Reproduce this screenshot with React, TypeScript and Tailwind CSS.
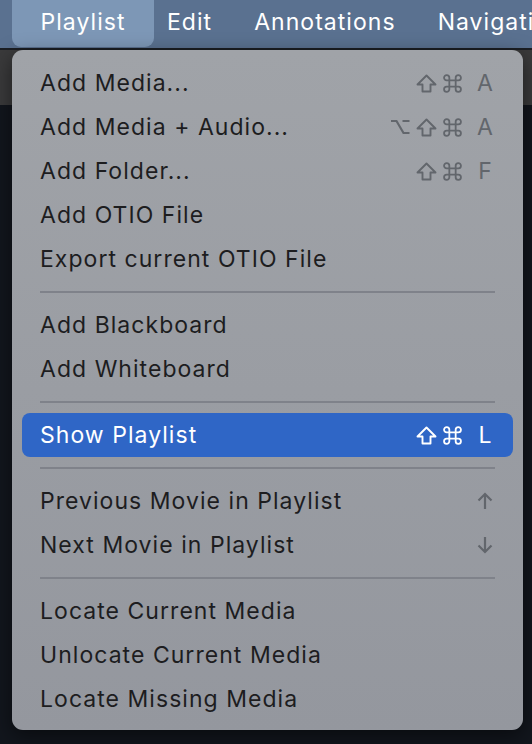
import React from "react";

type Item =
  | { kind: "item"; label: string; keys?: React.ReactNode[]; active?: boolean }
  | { kind: "sep" };

const ShiftKey = () => (
  <svg width="21" height="19" viewBox="0 0 21 19" fill="none">
    <path
      d="M10.5 1.5 L19.5 10.5 H14.5 V17.5 H6.5 V10.5 H1.5 Z"
      stroke="currentColor"
      strokeWidth="1.9"
      strokeLinejoin="round"
    />
  </svg>
);

const CmdKey = () => (
  <svg width="19" height="19" viewBox="0 0 18 18" fill="none">
    <path
      d="M6 6 V3.5 A2.5 2.5 0 1 0 3.5 6 H14.5 A2.5 2.5 0 1 0 12 3.5 V14.5 A2.5 2.5 0 1 0 14.5 12 H3.5 A2.5 2.5 0 1 0 6 14.5 Z"
      stroke="currentColor"
      strokeWidth="1.7"
      strokeLinejoin="round"
    />
  </svg>
);

const OptKey = () => (
  <svg width="20" height="18" viewBox="0 0 20 18" fill="none">
    <path
      d="M1 3 H6.5 L13.5 15 H19.5 M12.5 3 H19.5"
      stroke="currentColor"
      strokeWidth="2.2"
    />
  </svg>
);

const ArrowUp = () => (
  <svg width="16" height="18" viewBox="0 0 16 18" fill="none">
    <path d="M8 2 V17 M1.5 8.5 L8 2 L14.5 8.5" stroke="currentColor" strokeWidth="2.2" />
  </svg>
);

const ArrowDown = () => (
  <svg width="16" height="18" viewBox="0 0 16 18" fill="none">
    <path d="M8 1 V16 M1.5 9.5 L8 16 L14.5 9.5" stroke="currentColor" strokeWidth="2.2" />
  </svg>
);

const Letter = ({ c }: { c: string }) => (
  <span className="ml-[9px] w-[16px] text-center tracking-normal">{c}</span>
);

const items: Item[] = [
  { kind: "item", label: "Add Media...", keys: [<ShiftKey key="s" />, <CmdKey key="c" />, <Letter key="l" c="A" />] },
  {
    kind: "item",
    label: "Add Media + Audio...",
    keys: [<OptKey key="o" />, <ShiftKey key="s" />, <CmdKey key="c" />, <Letter key="l" c="A" />],
  },
  { kind: "item", label: "Add Folder...", keys: [<ShiftKey key="s" />, <CmdKey key="c" />, <Letter key="l" c="F" />] },
  { kind: "item", label: "Add OTIO File" },
  { kind: "item", label: "Export current OTIO File" },
  { kind: "sep" },
  { kind: "item", label: "Add Blackboard" },
  { kind: "item", label: "Add Whiteboard" },
  { kind: "sep" },
  {
    kind: "item",
    label: "Show Playlist",
    active: true,
    keys: [<ShiftKey key="s" />, <CmdKey key="c" />, <Letter key="l" c="L" />],
  },
  { kind: "sep" },
  { kind: "item", label: "Previous Movie in Playlist", keys: [<ArrowUp key="u" />] },
  { kind: "item", label: "Next Movie in Playlist", keys: [<ArrowDown key="d" />] },
  { kind: "sep" },
  { kind: "item", label: "Locate Current Media" },
  { kind: "item", label: "Unlocate Current Media" },
  { kind: "item", label: "Locate Missing Media" },
];

export default function App() {
  return (
    <div
      className="relative w-[532px] h-[744px] overflow-hidden bg-[#12161d] tracking-[0.065em]"
      style={{ fontFamily: "Inter, 'Noto Sans', sans-serif" }}
    >
      {/* menu bar */}
      <div className="h-[48px] bg-[#5a7190] flex items-start text-white text-[23px] whitespace-nowrap">
        <div className="shrink-0 ml-[12px] w-[142px] h-[47px] rounded-b-[9px] bg-[#7d97b6] flex items-center justify-center pb-[3px]">
          Playlist
        </div>
        <div className="shrink-0 ml-[13px] h-[45px] flex items-center">Edit</div>
        <div className="shrink-0 ml-[42px] h-[45px] flex items-center">Annotations</div>
        <div className="shrink-0 ml-[42px] h-[45px] flex items-center">Navigation</div>
      </div>
      <div className="h-[2px] bg-[#1b1e23]" />
      <div className="h-[55px] bg-[#3a3a3b]" />

      {/* dropdown menu */}
      <div className="absolute left-[12px] top-[50px] w-[511px] h-[680px] rounded-[11px] bg-gradient-to-b from-[#a0a3a8] to-[#94979e] shadow-[0_6px_20px_rgba(0,0,0,0.5)] pt-[11px] pb-[8px] text-[23px] text-[#1d1d1f]">
        {items.map((it, i) =>
          it.kind === "sep" ? (
            <div key={i} className="h-[22px] flex items-center px-[28px] pb-[1px]">
              <div className="h-[2px] w-full bg-[#7f828a]" />
            </div>
          ) : (
            <div
              key={i}
              className={
                it.active
                  ? "mx-[10px] h-[44px] rounded-[8px] bg-[#2f66c6] text-white flex items-center justify-between pl-[18px] pr-[20px]"
                  : "mx-[10px] h-[44px] flex items-center justify-between pl-[18px] pr-[20px]"
              }
            >
              <span>{it.label}</span>
              {it.keys && (
                <span
                  className={
                    it.active
                      ? "flex items-center gap-[6px] text-white"
                      : "flex items-center gap-[6px] text-[#62666c]"
                  }
                >
                  {it.keys}
                </span>
              )}
            </div>
          )
        )}
      </div>
    </div>
  );
}
